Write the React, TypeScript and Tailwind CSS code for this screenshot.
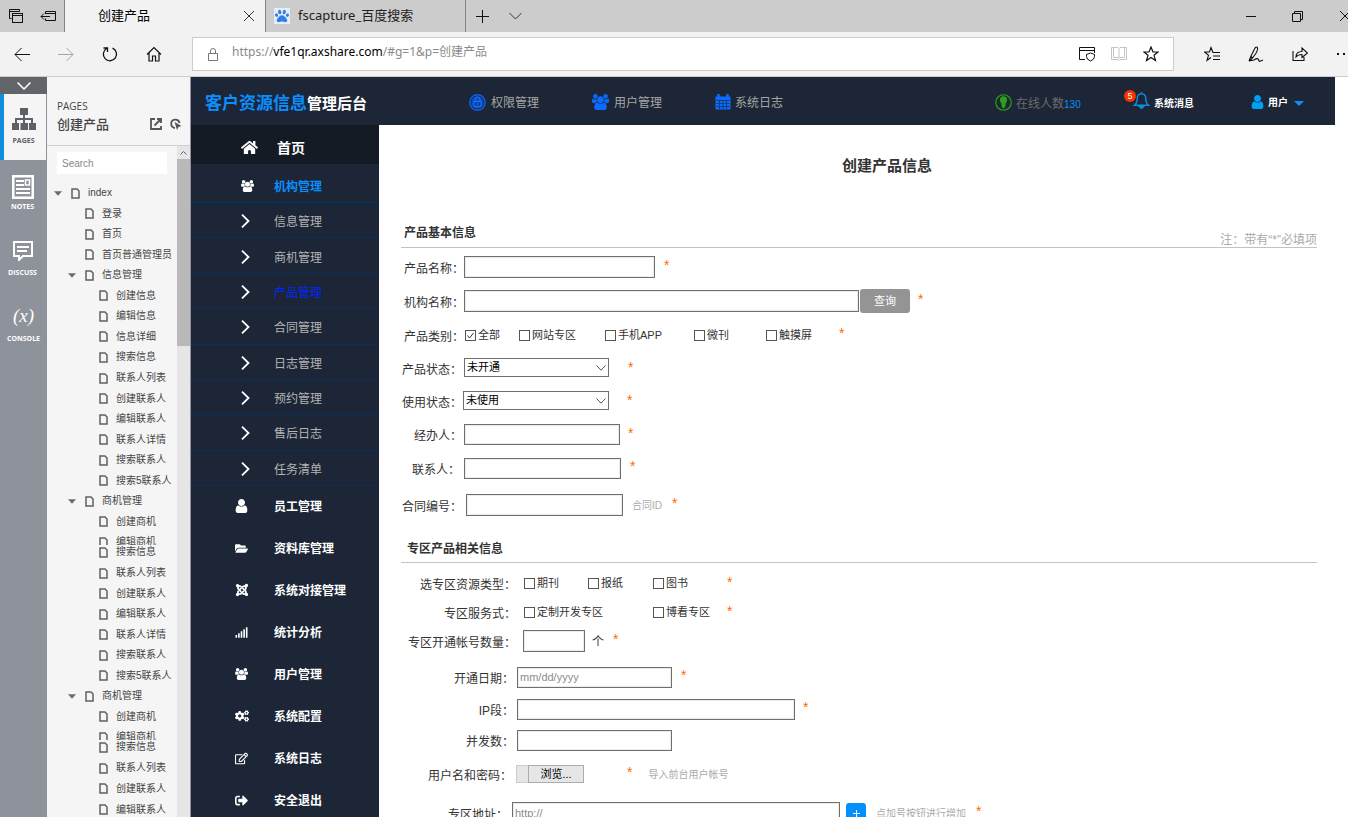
import React, { useState } from 'react';
import {
  FaHome,
  FaFolderOpen,
  FaJoomla,
  FaSignal,
  FaCogs,
  FaRegEdit,
  FaSignOutAlt,
  FaPaw,
} from 'react-icons/fa';

const GROUP_PATH =
  'M657 896q-162 5-265 128h-134q-82 0-138-40.5t-56-118.5q0-353 124-353 6 0 43.5 21t97.5 42.5 119 21.5q67 0 133-23-5 37-5 66 0 159 93 256zm1071 637q0 120-73 189.5t-194 69.5h-874q-121 0-194-69.5t-73-189.5q0-53 3.5-103.5t14-109 26.5-108.5 43-97.5 62-81 85.5-53.5 111.5-20q10 0 43 21.5t73 48 107 48 135 21.5 135-21.5 107-48 73-48 43-21.5q61 0 111.5 20t85.5 53.5 62 81 43 97.5 26.5 108.5 14 109 3.5 103.5zm-1024-1277q0 106-75 181t-181 75-181-75-75-181 75-181 181-75 181 75 75 181zm704 384q0 159-112.5 271.5t-271.5 112.5-271.5-112.5-112.5-271.5 112.5-271.5 271.5-112.5 271.5 112.5 112.5 271.5zm576 225q0 78-56 118.5t-138 40.5h-134q-103-123-265-128 93-97 93-256 0-29-5-66 66 23 133 23 59 0 119-21.5t97.5-42.5 43.5-21q124 0 124 353zm-128-609q0 106-75 181t-181 75-181-75-75-181 75-181 181-75 181 75 75 181z';

const USER_PATH =
  'M1536 1399q0 109-62.5 187t-150.5 78h-854q-88 0-150.5-78t-62.5-187q0-85 8.5-160.5t31.5-152 58.5-131 94-89 134.5-34.5q131 128 313 128t313-128q76 0 134.5 34.5t94 89 58.5 131 31.5 152 8.5 160.5zm-256-887q0 159-112.5 271.5t-271.5 112.5-271.5-112.5-112.5-271.5 112.5-271.5 271.5-112.5 271.5 112.5 112.5 271.5z';

function GroupIcon({ className }: { className?: string }) {
  return (
    <svg className={className} viewBox="64 0 1920 1792" fill="currentColor">
      <path d={GROUP_PATH} />
    </svg>
  );
}

function UserIcon({ className }: { className?: string }) {
  return (
    <svg className={className} viewBox="256 128 1280 1536" fill="currentColor">
      <path d={USER_PATH} />
    </svg>
  );
}

/* ---------- browser chrome ---------- */

function TabBar() {
  return (
    <div className="flex h-8 shrink-0 bg-[#cccccc] text-[13px] text-black">
      <div className="flex w-[65px] shrink-0 items-center gap-4 border-r border-[#848484] pl-2">
        <button aria-label="标签页">
          <svg className="size-4" viewBox="0 0 16 16" fill="none" stroke="#111">
            <path d="M3.5 10.5h-2v-9h10v2M1.500 3.500h10" />
            <rect x="4.5" y="5.500" width="10" height="9" />
            <path d="M4.500 7.500h10" />
          </svg>
        </button>
        <button aria-label="搁置标签页">
          <svg className="size-4" viewBox="0 0 16 16" fill="none" stroke="#111">
            <path d="M5.500 6V3.500h10v9h-10V10.500M5.500 5.500h10M1 8.500h9M4 5.500l-3 3 3 3" />
          </svg>
        </button>
      </div>
      <div className="flex w-[200px] shrink-0 items-center bg-[#f2f2f2] pr-2.5 pl-[33px]">
        <span className="flex-1">创建产品</span>
        <button aria-label="关闭标签页">
          <svg className="size-3" viewBox="0 0 12 12" fill="none" stroke="#333">
            <path d="M1 1l10 10M11 1L1 11" />
          </svg>
        </button>
      </div>
      <div className="flex w-[201px] shrink-0 items-center gap-2 border-x border-[#848484] pl-2">
        <span className="flex size-4 items-center justify-center bg-[#e8edf5] text-[#2f7fe6]">
          <FaPaw className="size-3.5" />
        </span>
        <span className="text-[#222]">fscapture_百度搜索</span>
      </div>
      <div className="flex flex-1 items-center gap-5 pl-2.5">
        <button aria-label="新标签页">
          <svg className="size-[13px]" viewBox="0 0 13 13" fill="none" stroke="#111">
            <path d="M0 6.500h13M6.500 0v13" />
          </svg>
        </button>
        <button aria-label="标签页预览">
          <svg className="h-2 w-[13px]" viewBox="0 0 13 8" fill="none" stroke="#333">
            <path d="M0.500 1l6 6 6-6" />
          </svg>
        </button>
      </div>
      <div className="-mr-[3px] flex shrink-0 items-center gap-9">
        <button aria-label="最小化">
          <svg className="h-3 w-2.5" viewBox="0 0 10 12" stroke="#111">
            <path d="M0 6.500h10" />
          </svg>
        </button>
        <button aria-label="还原">
          <svg className="size-[11px]" viewBox="0 0 11 11" fill="none" stroke="#111">
            <path d="M0.500 2.500h8v8h-8zM2.500 2.500v-2h8v8h-2" />
          </svg>
        </button>
        <button aria-label="关闭">
          <svg className="size-3" viewBox="0 0 12 12" fill="none" stroke="#111">
            <path d="M1 1l10 10M11 1L1 11" />
          </svg>
        </button>
      </div>
    </div>
  );
}

function AddressBar() {
  return (
    <div className="flex h-[45px] shrink-0 items-center border-b border-[#cccccc] bg-[#f2f2f2]">
      <div className="flex w-48 shrink-0 items-center gap-7 pl-3.5">
        <button aria-label="后退">
          <svg className="size-4" viewBox="0 0 16 16" fill="none" stroke="#111">
            <path d="M16 8.500H1M7.500 2L1 8.500 7.500 15" />
          </svg>
        </button>
        <button aria-label="前进">
          <svg className="size-4" viewBox="0 0 16 16" fill="none" stroke="#a5a5a5">
            <path d="M0 8.500h15M8.500 2L15 8.500 8.500 15" />
          </svg>
        </button>
        <button aria-label="刷新">
          <svg className="size-4" viewBox="0 0 16 16" fill="none" stroke="#111" strokeWidth="1.3">
            <path d="M10.500 2.100A6.600 6.600 0 1 1 4.600 2.500M1.500 2h4v4" />
          </svg>
        </button>
        <button aria-label="主页">
          <svg className="size-4" viewBox="0 0 16 16" fill="none" stroke="#111" strokeWidth="1.2">
            <path d="M1 8.500L8 1.500l7 7M3 7v8h3.500v-5h3v5H13V7" />
          </svg>
        </button>
      </div>
      <div className="flex h-[34px] flex-1 items-center border border-[#cccccc] bg-white px-3.5 text-xs">
        <svg className="h-3.5 w-3" viewBox="0 0 12 14" fill="none" stroke="#777">
          <path d="M1.500 6.500h9v7h-9zM3.500 6.500V4a2.500 2.500 0 0 1 5 0v2.500" />
        </svg>
        <div className="ml-[13px] flex-1 pb-1 text-[#8a8a8a]">
          https://<span className="text-black">vfe1qr.axshare.com</span>/#g=1&amp;p=创建产品
        </div>
        <div className="flex items-center gap-4">
          <svg className="size-4" viewBox="0 0 16 16" fill="none" stroke="#111">
            <path d="M6 13.500H0.500v-12h15V7M0.500 4.500h15M7.500 8.500l4-1.500 4 1.500v2q0 3-4 4.500-4-1.500-4-4.500z" />
          </svg>
          <svg className="size-4" viewBox="0 0 16 16" fill="none" stroke="#c4c4c4">
            <path d="M0.500 1.500H7l1 1 1-1h6.500v12H9l-1 1-1-1H0.500zM8 3v9M2.500 1.500v10h4.500l1 1 1-1h4.500v-10" />
          </svg>
          <button aria-label="收藏">
            <svg className="size-4" viewBox="0 0 16 16" fill="none" stroke="#111" strokeWidth="1.2">
              <path d="M8 1l2 5h5l-4 3.300 1.500 5.200L8 11.400l-4.500 3.100L5 9.300 1 6h5z" />
            </svg>
          </button>
        </div>
      </div>
      <div className="-mr-1 flex w-[178px] shrink-0 items-center justify-between pl-[30px]">
        <button aria-label="收藏夹">
          <svg className="size-4" viewBox="0 0 16 16" fill="none" stroke="#111" strokeWidth="1.1">
            <path d="M16 6.500H9L7 1.500 5.500 6H0.500l4 3.300-1.500 5L7 11.500M9 10h7M9 13.500h7" />
          </svg>
        </button>
        <button aria-label="添加笔记">
          <svg className="size-4" viewBox="0 0 16 16" fill="none" stroke="#111" strokeWidth="1.1">
            <path d="M1 15l2-5L7 2q2-2 2.500 0t-2 6L4 12.500l-3 2.500 5-1q3-2 4-1t1 2 4-1M3 10l1.500 2.500" />
          </svg>
        </button>
        <button aria-label="共享">
          <svg className="size-4" viewBox="0 0 16 16" fill="none" stroke="#111" strokeWidth="1.1">
            <path d="M1 5v9.500h11V11M4 11q0-5.500 6-5.500V2l5.500 5-5.500 4.500V8.500q-4 0-6 2.500z" />
          </svg>
        </button>
        <button aria-label="更多">
          <svg className="size-4" viewBox="0 0 16 16" fill="#111">
            <path d="M1 7h2v2H1zM7 7h2v2H7zM13 7h2v2h-2z" />
          </svg>
        </button>
      </div>
    </div>
  );
}

/* ---------- prototype viewer: rail and page tree ---------- */

const railFont = 'font-["Open_Sans",sans-serif] text-[7px] leading-[10px] font-bold';

function Rail() {
  return (
    <div className="w-[47px] shrink-0 bg-[#8e939b] text-white">
      <button aria-label="收起" className="flex h-[17px] w-full items-center justify-center bg-[#616469]">
        <svg className="h-2 w-3.5" viewBox="0 0 14 8" fill="none" stroke="#fff" strokeWidth="1.500">
          <path d="M0.500 0.500L7 7l6.500-6.500" />
        </svg>
      </button>
      <button className="flex h-[66px] w-full flex-col items-center gap-1.5 border-r border-l-4 border-r-[#8e939b] border-l-[#138ede] bg-[#f5f5f5] pt-3.5 pr-[3px] text-[#5d6066]">
        <svg className="h-[22px] w-6 shrink-0" viewBox="0 0 24 22" fill="currentColor">
          <path d="M8 0h8v7H8zM11 7h2v3h8v5h3v7h-7v-7h2v-3h-6v3h3v7H8.500v-7H11v-3H5v3h2v7H0v-7h3v-5h8z" />
        </svg>
        <span className={railFont}>PAGES</span>
      </button>
      <button className="flex h-[66px] w-full flex-col items-center gap-[3px] pt-[15px] pr-0.5">
        <svg className="h-6 w-[22px] shrink-0" viewBox="0 0 22 24" fill="none" stroke="currentColor" strokeWidth="2">
          <rect x="1" y="1" width="20" height="22" strokeWidth="3" />
          <path d="M4 6h8M4 10h8M4 14h14M4 18h14" />
          <rect x="13.500" y="5" width="4" height="5" strokeWidth="1.500" />
        </svg>
        <span className={railFont}>NOTES</span>
      </button>
      <button className="flex h-[66px] w-full flex-col items-center gap-[7px] pt-[15px] pr-0.5">
        <svg className="h-5 w-[22px] shrink-0" viewBox="0 0 22 20" fill="none" stroke="currentColor" strokeWidth="2">
          <path d="M2 1h18v14H11l-4 4v-4H2zM5 6h12M5 10h10" />
        </svg>
        <span className={railFont}>DISCUSS</span>
      </button>
      <button className="flex h-[66px] w-full flex-col items-center gap-1.5 pt-3">
        <span className="font-['Liberation_Serif',serif] text-[19px] leading-6 italic">(x)</span>
        <span className={railFont}>CONSOLE</span>
      </button>
    </div>
  );
}

interface TreeNode {
  name: string;
  level: number;
  open?: boolean;
}

const contactPages: TreeNode[] = [
  { name: '联系人列表', level: 3 },
  { name: '创建联系人', level: 3 },
  { name: '编辑联系人', level: 3 },
  { name: '联系人详情', level: 3 },
  { name: '搜索联系人', level: 3 },
  { name: '搜索5联系人', level: 3 },
];

const businessPages: TreeNode[] = [
  { name: '商机管理', level: 2, open: true },
  { name: '创建商机', level: 3 },
];

const firstPages: TreeNode[] = [
  { name: 'index', level: 1, open: true },
  { name: '登录', level: 2 },
  { name: '首页', level: 2 },
  { name: '首页普通管理员', level: 2 },
  { name: '信息管理', level: 2, open: true },
  { name: '创建信息', level: 3 },
  { name: '编辑信息', level: 3 },
  { name: '信息详细', level: 3 },
  { name: '搜索信息', level: 3 },
  ...contactPages,
  ...businessPages,
];

const indent: Record<number, string> = {
  1: 'pl-[7px]',
  2: 'pl-[21px]',
  3: 'pl-[35px]',
};

function TreeRow({ node }: { node: TreeNode }) {
  return (
    <div className={`flex items-center leading-[14px] ${indent[node.level]}`}>
      <span className="w-[17px] shrink-0">
        {node.open && (
          <svg className="h-[5px] w-2" viewBox="0 0 9 5" fill="#6b6b6b">
            <path d="M0 0h9L4.500 5z" />
          </svg>
        )}
      </span>
      <svg className="mr-2 h-[11px] w-[9px] shrink-0" viewBox="0 0 9 11" fill="none" stroke="#5d6066" strokeWidth="1.500">
        <path d="M1 1h5l2 2v7H1z" />
      </svg>
      <a href="#" className="whitespace-nowrap">{node.name}</a>
    </div>
  );
}

function PageTree() {
  return (
    <div className="flex w-36 shrink-0 flex-col border-r border-[#8e939b] bg-[#f5f5f5] text-[#444]">
      <div className="flex h-[69px] shrink-0 flex-col border-b border-[#cfcfcf] pt-[21px] pl-2.5">
        <span className="font-['Open_Sans',sans-serif] text-[10px] leading-4">PAGES</span>
        <div className="flex items-center pr-2">
          <span className="flex-1 text-[13px] leading-5 font-medium">创建产品</span>
          <svg className="mr-2 size-3" viewBox="0 0 12 12" fill="none" stroke="#555" strokeWidth="1.800">
            <path d="M5 1H1v10h10V8M7 1h4v4M11 1L4.500 7.500" />
          </svg>
          <svg className="size-3" viewBox="0 0 12 12" fill="none" stroke="#555" strokeWidth="1.800">
            <path d="M5 10A4.200 4.200 0 1 1 9.500 5" />
            <path d="M4.500 4l7 4-3 1-1.500 3z" fill="#555" stroke="none" />
          </svg>
        </div>
      </div>
      <div className="flex min-h-0 flex-1">
        <div className="min-w-0 flex-1 overflow-hidden font-['Liberation_Sans','Noto_Sans_CJK_SC',sans-serif] text-[10px]">
          <input
            type="text"
            aria-label="Search"
            placeholder="Search"
            className="mt-1.5 mb-[9px] ml-2.5 block h-[22px] w-[110px] bg-white px-[5px] text-[10px] outline-none placeholder:text-[#888]"
          />
          <div className="grid h-[349px] auto-rows-fr">
            {firstPages.map((node, i) => (
              <TreeRow key={i} node={node} />
            ))}
          </div>
          <div className="h-[13px] overflow-hidden pt-[3px]">
            <TreeRow node={{ name: '编辑商机', level: 3 }} />
          </div>
          <div className="h-[18px]">
            <TreeRow node={{ name: '搜索信息', level: 3 }} />
          </div>
          <div className="grid h-[164px] auto-rows-fr">
            {[...contactPages, ...businessPages].map((node, i) => (
              <TreeRow key={i} node={node} />
            ))}
          </div>
          <div className="h-[13px] overflow-hidden pt-[3px]">
            <TreeRow node={{ name: '编辑商机', level: 3 }} />
          </div>
          <div className="h-[18px]">
            <TreeRow node={{ name: '搜索信息', level: 3 }} />
          </div>
          <div className="grid h-[62px] auto-rows-fr">
            {contactPages.slice(0, 3).map((node, i) => (
              <TreeRow key={i} node={node} />
            ))}
          </div>
        </div>
        {/* scroll bar */}
        <div className="w-[13px] shrink-0 bg-[#e6e6e6]">
          <div className="flex h-[13px] items-center justify-center">
            <svg className="h-1 w-[7px]" viewBox="0 0 7 4" fill="none" stroke="#666">
              <path d="M0.500 3.500l3-3 3 3" />
            </svg>
          </div>
          <div className="h-[187px] bg-[#b9b9b9]"></div>
        </div>
      </div>
    </div>
  );
}

/* ---------- admin console ---------- */

function AdminHeader() {
  return (
    <header className="mr-[13px] flex h-12 shrink-0 items-center bg-[#1c2636] pl-3.5 text-xs text-[#a6a6a6]">
      <h1 className="flex w-[264px] shrink-0 items-center pt-1.5 font-bold">
        <span className="text-[17px] text-[#0a8fff]">客户资源信息</span>
        <span className="text-[15px] text-white">管理后台</span>
      </h1>
      <nav className="flex flex-1 pt-1">
        <a href="#" className="flex w-[123px] items-center gap-[5px]">
          <svg className="mb-0.5 size-[17px]" viewBox="0 0 17 17" fill="none">
            <circle cx="8.500" cy="8.500" r="7.700" stroke="#0d5fe8" strokeWidth="1.500" />
            <circle cx="8.500" cy="8.500" r="6.200" fill="#0a4bbf" />
            <path d="M5 7.500h7v5H5z" stroke="#1b76ff" fill="#0a3f9f" />
            <path d="M6 7V5.500a2.500 2.500 0 0 1 5 0V7M8.500 9v2" stroke="#1b76ff" />
          </svg>
          权限管理
        </a>
        <a href="#" className="flex w-[123px] items-center gap-[5px]">
          <GroupIcon className="mb-0.5 h-4 w-[17px] text-[#0a6cff]" />
          用户管理
        </a>
        <a href="#" className="flex w-[123px] items-center gap-1">
          <svg className="mb-0.5 size-4" viewBox="0 0 16 16" fill="none">
            <path d="M0.500 2.500h15v13h-15z" fill="#0a6cff" />
            <path d="M3.500 0v4M12.500 0v4" stroke="#0a6cff" strokeWidth="2.500" />
            <path d="M1.500 6.500h13M1.500 9.500h13M1.500 12.500h13M4.500 6v9M8 6v9M11.500 6v9" stroke="#123a7d" />
          </svg>
          系统日志
        </a>
      </nav>
      <div className="flex w-[129px] shrink-0 items-center pt-1.5 text-[#6c6c6c]">
        <svg className="mr-1 mb-1 size-[17px]" viewBox="0 0 18 18" fill="none">
          <circle cx="9" cy="9" r="8.200" stroke="#2ba11a" strokeWidth="1.200" />
          <path d="M9 2.500q3.800 0 3.800 4 0 2-1.600 3.500V12q0 2-2.200 3.500Q6.800 14 6.800 12V10Q5.200 8.500 5.200 6.500 5.200 2.500 9 2.500z" fill="#2ba11a" />
        </svg>
        在线人数<span className="pt-0.5 font-['Liberation_Sans',Arial,sans-serif] text-[10px] text-[#0a8fff]">130</span>
      </div>
      <a href="#" className="flex w-[127px] shrink-0 items-center gap-1 pl-[9px] text-[10px] font-bold text-white">
        <span className="relative">
          <svg className="size-[17px]" viewBox="0 0 18 18" fill="none" stroke="#0a8fdf" strokeWidth="1.500">
            <path d="M9 2q4.500 0 4.500 5 0 5 3 7h-15q3-2 3-7Q4.500 2 9 2zM9 0v2" />
            <path d="M7 15.500h4L9 17.500z" fill="#0a8fdf" />
          </svg>
          <span className="absolute -top-0.5 -left-[9px] flex size-3 items-center justify-center rounded-full bg-[#f53100] font-['Liberation_Sans',Arial,sans-serif] text-[9px] font-normal">
            5
          </span>
        </span>
        <span className="pt-1.5">系统消息</span>
      </a>
      <button className="flex w-[84px] shrink-0 items-center gap-1 pt-1 text-[10px] font-bold text-white">
        <UserIcon className="mb-0.5 h-3.5 w-[13px] text-[#00a0f5]" />
        用户
        <svg className="ml-0.5 h-[5px] w-2.5" viewBox="0 0 10 5" fill="#0a8fff">
          <path d="M0 0h10L5 5z" />
        </svg>
      </button>
    </header>
  );
}

const subMenu = [
  '信息管理',
  '商机管理',
  '产品管理',
  '合同管理',
  '日志管理',
  '预约管理',
  '售后日志',
  '任务清单',
];

const mainMenu = [
  { name: '员工管理', icon: <UserIcon className="h-3.5 w-[13px]" /> },
  { name: '资料库管理', icon: <FaFolderOpen className="size-[13px]" /> },
  { name: '系统对接管理', icon: <FaJoomla className="size-3.5" /> },
  { name: '统计分析', icon: <FaSignal className="size-[13px]" /> },
  { name: '用户管理', icon: <GroupIcon className="h-3 w-[13px]" /> },
  { name: '系统配置', icon: <FaCogs className="size-3.5" /> },
  { name: '系统日志', icon: <FaRegEdit className="size-[13px]" /> },
  { name: '安全退出', icon: <FaSignOutAlt className="size-[13px]" /> },
];

function SideMenu() {
  return (
    <aside className="w-[188px] shrink-0 bg-[#1c2636] text-xs text-white">
      <a href="#" className="flex h-[39px] items-center bg-[#151b25] pt-1.5 pl-[50px] text-sm font-bold">
        <span className="w-9">
          <FaHome className="size-[17px]" />
        </span>
        首页
      </a>
      <a href="#" className="flex h-[39px] items-center border-b border-[#00356b] pt-2 pl-[50px] font-bold text-[#0a8fff]">
        <span className="w-[33px] pb-0.5 text-white">
          <GroupIcon className="h-3 w-[13px]" />
        </span>
        机构管理
      </a>
      <div className="grid h-[283px] auto-rows-fr">
        {subMenu.map((name) => (
          <a key={name} href="#" className="flex items-center border-b border-[#0c305a] pt-0.5 pl-[50px] text-[#b4b4b4]">
            <span className="w-[33px]">
              <svg className="h-3.5 w-[9px]" viewBox="0 0 9 14" fill="none" stroke="#fff" strokeWidth="1.800">
                <path d="M1 0.700L7.500 7 1 13.300" />
              </svg>
            </span>
            <span className={name === '产品管理' ? 'pt-0.5 text-[#0026ff]' : 'pt-0.5'}>{name}</span>
          </a>
        ))}
      </div>
      {mainMenu.map((item) => (
        <a key={item.name} href="#" className="flex h-[42px] items-center pl-11 font-bold">
          <span className="w-[39px] pb-0.5">{item.icon}</span>
          {item.name}
        </a>
      ))}
    </aside>
  );
}

const textBox =
  'rounded-none border border-[#6f6f6f] bg-white px-0.5 font-["Liberation_Sans",Arial,sans-serif] text-[11px] shadow-[inset_0_0_0_1px_#ececec] outline-none placeholder:text-[#8c8c8c]';

function Star({ className }: { className: string }) {
  return (
    <span className={`pb-1 font-['Liberation_Sans',Arial,sans-serif] text-sm leading-4 text-[#ff6a00] ${className}`}>*</span>
  );
}

function CheckOption({ label, width, defaultChecked }: { label: string; width: string; defaultChecked?: boolean }) {
  const [checked, setChecked] = useState(!!defaultChecked);

  return (
    <label className={`flex shrink-0 items-center gap-0.5 text-[11px] ${width}`}>
      <span className="relative flex size-[11px]">
        <input
          type="checkbox"
          checked={checked}
          onChange={() => setChecked(!checked)}
          className="size-[11px] appearance-none border border-[#555] bg-white"
        />
        {checked && (
          <svg className="pointer-events-none absolute inset-0 size-[11px]" viewBox="0 0 11 11" fill="none" stroke="#333">
            <path d="M2.500 5.500l2 2.500 4-5" />
          </svg>
        )}
      </span>
      {label}
    </label>
  );
}

function StatusSelect({ id, options, className }: { id: string; options: string[]; className: string }) {
  return (
    <span className={`relative mb-0.5 flex ${className}`}>
      <select id={id} className="h-[19px] w-full appearance-none border border-[#6f6f6f] bg-white pl-0.5 text-[11px] text-black">
        {options.map((option) => (
          <option key={option}>{option}</option>
        ))}
      </select>
      <svg className="pointer-events-none absolute top-[7px] right-[3px] h-1.5 w-2.5" viewBox="0 0 10 6" fill="none" stroke="#555">
        <path d="M0.500 0.500L5 5.200 9.500 0.500" />
      </svg>
    </span>
  );
}

interface RowProps {
  label: string;
  htmlFor?: string;
  height: string;
  labelWidth: string;
  children: React.ReactNode;
}

function Row({ label, htmlFor, height, labelWidth, children }: RowProps) {
  const labelClass = `shrink-0 pt-[3px] text-right ${labelWidth}`;
  return (
    <div className={`flex items-center ${height}`}>
      {htmlFor ? (
        <label htmlFor={htmlFor} className={labelClass}>{label}：</label>
      ) : (
        <span className={labelClass}>{label}：</span>
      )}
      {children}
    </div>
  );
}

function ProductForm() {
  return (
    <form className="min-w-0 flex-1 bg-white pr-[31px] pl-[22px] text-xs text-[#333]">
      <h2 className="pt-[30px] pl-14 text-center text-[15px] leading-[22px] font-bold">创建产品信息</h2>

      <div className="mt-12 flex h-[23px] items-start justify-between border-b border-[#c2c2c2]">
        <h3 className="pl-[3px] leading-4 font-bold">产品基本信息</h3>
        <span className="self-end leading-[14px] text-[#aaa]">注：带有“*”必填项</span>
      </div>
      <div className="pt-0.5">
        <Row label="产品名称" htmlFor="productName" height="h-[34px]" labelWidth="w-[63px]">
          <input id="productName" type="text" className={`h-[22px] w-[191px] ${textBox}`} />
          <Star className="ml-[9px]" />
        </Row>
        <Row label="机构名称" htmlFor="orgName" height="h-[34px]" labelWidth="w-[63px]">
          <input id="orgName" type="text" className={`h-[22px] w-[395px] ${textBox}`} />
          <button type="button" className="ml-px h-6 w-[50px] rounded-[3px] bg-[#949494] text-[11px] text-white">
            查询
          </button>
          <Star className="ml-2" />
        </Row>
        <Row label="产品类别" height="h-[34px]" labelWidth="w-[63px]">
          <span className="flex pl-px">
            <CheckOption label="全部" width="w-[54px]" defaultChecked />
            <CheckOption label="网站专区" width="w-[86px]" />
            <CheckOption label="手机APP" width="w-[89px]" />
            <CheckOption label="微刊" width="w-[72px]" />
            <CheckOption label="触摸屏" width="w-[73px]" />
          </span>
          <Star className="" />
        </Row>
        <Row label="产品状态" htmlFor="productState" height="h-[33px]" labelWidth="w-[61px]">
          <StatusSelect id="productState" options={['未开通', '已开通']} className="ml-0.5 w-[145px]" />
          <Star className="ml-[19px]" />
        </Row>
        <Row label="使用状态" htmlFor="useState" height="h-[33px]" labelWidth="w-[61px]">
          <StatusSelect id="useState" options={['未使用', '使用中']} className="ml-px w-[146px]" />
          <Star className="ml-[18px]" />
        </Row>
        <Row label="经办人" htmlFor="operator" height="h-[33px]" labelWidth="w-[61px]">
          <input id="operator" type="text" className={`ml-0.5 h-[21px] w-[156px] ${textBox}`} />
          <Star className="ml-2" />
        </Row>
        <Row label="联系人" htmlFor="contact" height="h-[34px]" labelWidth="w-[59px]">
          <input id="contact" type="text" className={`ml-1 h-[21px] w-[157px] ${textBox}`} />
          <Star className="ml-[9px]" />
        </Row>
        <Row label="合同编号" htmlFor="contractNo" height="h-10" labelWidth="w-[61px]">
          <input id="contractNo" type="text" className={`ml-1 h-[22px] w-[157px] ${textBox}`} />
          <span className="ml-[9px] pt-0.5 text-[10px] text-[#aaa]">合同ID</span>
          <Star className="ml-2.5" />
        </Row>
      </div>

      <div className="mt-4 h-[22px] border-b border-[#c2c2c2]">
        <h3 className="pl-1.5 leading-4 font-bold">专区产品相关信息</h3>
      </div>
      <div className="pt-1.5">
        <Row label="选专区资源类型" height="h-[29px]" labelWidth="w-[115px]">
          <span className="flex pl-2">
            <CheckOption label="期刊" width="w-16" />
            <CheckOption label="报纸" width="w-[65px]" />
            <CheckOption label="图书" width="w-[74px]" />
          </span>
          <Star className="" />
        </Row>
        <Row label="专区服务式" height="h-[29px]" labelWidth="w-[115px]">
          <span className="flex pl-2">
            <CheckOption label="定制开发专区" width="w-[129px]" />
            <CheckOption label="博看专区" width="w-[74px]" />
          </span>
          <Star className="" />
        </Row>
        <Row label="专区开通帐号数量" htmlFor="accountCount" height="h-7" labelWidth="w-[115px]">
          <input id="accountCount" type="text" className={`ml-[7px] h-[22px] w-[62px] ${textBox}`} />
          <span className="ml-[7px] pt-0.5">个</span>
          <Star className="ml-[9px]" />
        </Row>
      </div>
      <div className="pt-1.5">
        <Row label="开通日期" htmlFor="openDate" height="h-8" labelWidth="w-[113px]">
          <input id="openDate" type="text" placeholder="mm/dd/yyyy" className={`ml-[3px] h-[21px] w-[155px] ${textBox}`} />
          <Star className="ml-[9px]" />
        </Row>
        <Row label="IP段" htmlFor="ipRange" height="h-8" labelWidth="w-[113px]">
          <input id="ipRange" type="text" className={`ml-[3px] h-[21px] w-[278px] ${textBox}`} />
          <Star className="ml-2" />
        </Row>
        <Row label="并发数" htmlFor="concurrency" height="h-[30px]" labelWidth="w-[113px]">
          <input id="concurrency" type="text" className={`ml-[3px] h-[21px] w-[155px] ${textBox}`} />
        </Row>
        <Row label="用户名和密码" htmlFor="accountFile" height="h-[38px]" labelWidth="w-[111px]">
          <input id="accountFile" type="file" className="sr-only" />
          <label htmlFor="accountFile" className="ml-1 flex h-[18px] w-[68px] bg-[#e6e6e6] text-[11px] leading-[17px] text-black">
            <span className="w-3 border border-r-0 border-[#ccc]"></span>
            <span className="flex-1 border border-[#adadad] text-center">浏览...</span>
          </label>
          <Star className="ml-[43px]" />
          <span className="ml-4 pt-0.5 text-[10px] text-[#aaa]">导入前台用户帐号</span>
        </Row>
        <Row label="专区地址" htmlFor="zoneUrl" height="h-10" labelWidth="w-[107px]">
          <input id="zoneUrl" type="text" placeholder="http://" className={`ml-1 h-[22px] w-[328px] ${textBox}`} />
          <button type="button" aria-label="增加" className="ml-1.5 flex h-5 w-5 items-center justify-center rounded-[3px] bg-[#0091ff]">
            <svg className="size-[7px]" viewBox="0 0 7 7" stroke="#fff">
              <path d="M0 3.500h7M3.500 0v7" />
            </svg>
          </button>
          <span className="ml-2.5 pt-0.5 text-[10px] text-[#aaa]">点加号按钮进行增加</span>
          <Star className="ml-2.5" />
        </Row>
      </div>
    </form>
  );
}

export default function App() {
  return (
    <div className="flex h-screen flex-col overflow-hidden bg-white font-['Noto_Sans','Noto_Sans_CJK_SC',sans-serif]">
      <TabBar />
      <AddressBar />
      <div className="flex min-h-0 flex-1">
        <Rail />
        <PageTree />
        <div className="flex min-w-0 flex-1 flex-col font-['Liberation_Sans','Noto_Sans_CJK_SC',sans-serif]">
          <AdminHeader />
          <div className="flex min-h-0 flex-1">
            <SideMenu />
            <ProductForm />
          </div>
        </div>
      </div>
    </div>
  );
}
